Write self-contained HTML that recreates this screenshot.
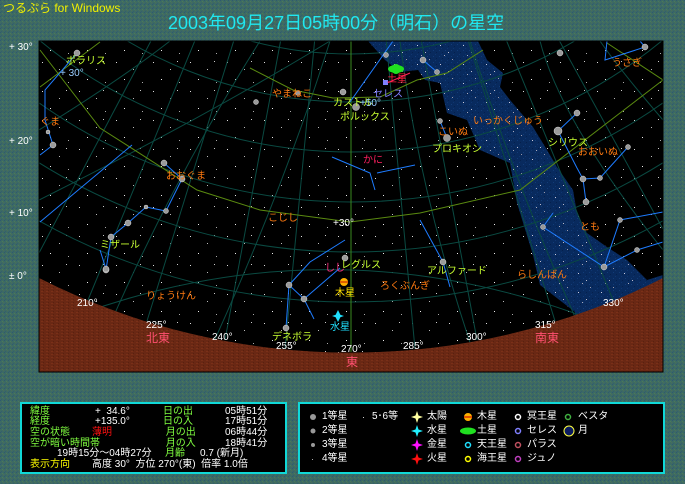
<!DOCTYPE html>
<html><head><meta charset="utf-8"><style>
*{margin:0;padding:0}
body{width:685px;height:484px;overflow:hidden;background:#3d6a64;font-family:"Liberation Sans","Noto Sans CJK JP",sans-serif;position:relative}
.t{position:absolute;white-space:nowrap;font-size:10px;line-height:11px}
.panel{position:absolute;background:#000;border:2px solid #10d8d8;box-sizing:border-box}
</style></head><body>
<svg width="685" height="484" style="position:absolute;left:0;top:0">
<defs>
<pattern id="bgn" width="4" height="4" patternUnits="userSpaceOnUse">
<rect width="4" height="4" fill="#3d6a64"/><rect x="0" y="0" width="1" height="1" fill="#2f5a70"/><rect x="2" y="1" width="1" height="1" fill="#4a7a5a"/><rect x="1" y="3" width="1" height="1" fill="#355e6e"/><rect x="3" y="2" width="1" height="1" fill="#4c6e58"/>
</pattern>
<pattern id="gnd" width="5" height="3" patternUnits="userSpaceOnUse">
<rect width="5" height="3" fill="#6a2814"/><rect x="1" y="0" width="2" height="1" fill="#7a3018"/><rect x="3" y="2" width="1" height="1" fill="#5a200e"/>
</pattern>
<pattern id="st" width="37" height="29" patternUnits="userSpaceOnUse">
<rect x="5" y="4" width="1" height="1" fill="#ddd"/><rect x="22" y="11" width="1" height="1" fill="#bbb"/><rect x="13" y="21" width="1" height="1" fill="#eee"/><rect x="31" y="24" width="1" height="1" fill="#aaa"/><rect x="29" y="3" width="1" height="1" fill="#ccc"/>
</pattern>
<pattern id="st2" width="23" height="19" patternUnits="userSpaceOnUse">
<rect x="3" y="7" width="1" height="1" fill="#ccd"/><rect x="15" y="2" width="1" height="1" fill="#99a"/><rect x="11" y="14" width="1" height="1" fill="#bbc"/><rect x="7" y="17" width="1" height="1" fill="#aab"/>
</pattern>
<pattern id="mw" width="6" height="6" patternUnits="userSpaceOnUse">
<rect width="6" height="6" fill="#082a5e"/><rect x="1" y="2" width="1" height="1" fill="#123c78"/><rect x="4" y="4" width="1" height="1" fill="#05204c"/><rect x="3" y="0" width="1" height="1" fill="#0f3670"/>
</pattern>
<clipPath id="ch"><rect x="39" y="41" width="624" height="331"/></clipPath>
</defs>
<rect width="685" height="484" fill="url(#bgn)"/>
<g clip-path="url(#ch)">
<rect x="39" y="41" width="624" height="331" fill="#000"/>
<rect x="39" y="41" width="624" height="331" fill="url(#st)"/>
<polygon fill="url(#mw)" points="368,41 478,41 487,60 503,73 500,87 510,100 533,127 547,150 557,167 573,190 577,213 587,233 607,247 627,260 647,280 663,275 663,372 575,372 575,312 540,285 533,255 517,203 510,163 480,150 467,120 447,113 440,83 425,80 418,70 400,72 385,60"/>
<polygon fill="url(#st2)" points="368,41 478,41 487,60 503,73 500,87 510,100 533,127 547,150 557,167 573,190 577,213 587,233 607,247 627,260 647,280 575,312 540,285 533,255 517,203 510,163 480,150 467,120 447,113 440,83 425,80 418,70 400,72 385,60"/>
<g fill="none" stroke="#0a4a42" stroke-width="1">
<circle cx="351" cy="-338" r="640"/><circle cx="351" cy="-338" r="590"/><circle cx="351" cy="-338" r="540"/><circle cx="351" cy="-338" r="490"/><circle cx="351" cy="-338" r="440"/><circle cx="351" cy="-338" r="392"/>
<line x1="351" y1="-338" x2="88" y2="300"/><line x1="351" y1="-338" x2="147" y2="321"/><line x1="351" y1="-338" x2="225" y2="340"/><line x1="351" y1="-338" x2="285" y2="349"/><line x1="351" y1="-338" x2="415" y2="349"/><line x1="351" y1="-338" x2="477" y2="340"/><line x1="351" y1="-338" x2="555" y2="321"/><line x1="351" y1="-338" x2="613" y2="300"/><line x1="351" y1="-338" x2="30" y2="270"/><line x1="351" y1="-338" x2="680" y2="260"/>
<path d="M39,200 Q200,120 330,41"/><path d="M39,130 Q120,80 170,41"/><path d="M90,372 Q160,200 260,41"/><path d="M200,372 Q280,200 330,41"/><path d="M480,372 Q420,200 400,41"/><path d="M600,372 Q520,200 470,41"/><path d="M663,250 Q560,120 540,41"/><path d="M663,120 Q620,70 600,41"/><path d="M39,330 Q350,200 663,350"/>
</g>
<g fill="none" stroke="#5a8a10" stroke-width="1">
<path d="M40,50 L100,128 L197,190 L260,210 L350,222 L420,213 L520,190 L607,123 L663,80"/>
<path d="M40,87 L100,42"/><path d="M250,68 L293,90 L333,98 L380,97 L417,80 L447,73 L483,50"/><path d="M607,43 L663,80"/>
</g>
<line x1="351" y1="41" x2="351" y2="352" stroke="#3a8a20" stroke-width="1"/>
<g fill="none" stroke="#1e7cff" stroke-width="1">
<polyline points="77,53 45,90 45,120 53,145 40,155"/><polyline points="132,145 40,222"/>
<polyline points="164,163 182,179 166,211 146,207 128,223 111,237 106,270"/>
<polyline points="350,102 393,41"/><polyline points="423,60 437,72"/><polyline points="440,121 447,138"/>
<polyline points="332,157 370,173 375,190"/><polyline points="377,173 415,165"/>
<polyline points="607,41 605,60 645,47 640,41"/>
<polyline points="577,113 558,131 577,168 583,179 586,202"/><polyline points="583,179 600,178 628,147"/>
<polyline points="553,213 543,227 604,267 620,220 663,212"/><polyline points="604,267 637,250 663,242"/>
<polyline points="289,285 304,299 314,319"/><polyline points="289,285 286,328"/><polyline points="289,285 310,262 345,240"/><polyline points="304,299 340,268"/>
<polyline points="420,220 443,262 450,287"/><polyline points="106,269 100,250"/>
</g>
<path d="M387,83 L410,73" stroke="#ff2060"/>
<g fill="#9a9a9a" stroke="#ddd" stroke-width="0.5">
<circle cx="77" cy="53" r="3"/><circle cx="53" cy="145" r="3"/><circle cx="164" cy="163" r="3"/><circle cx="182" cy="179" r="3"/><circle cx="166" cy="211" r="2.5"/><circle cx="146" cy="207" r="2"/><circle cx="128" cy="223" r="3"/><circle cx="111" cy="237" r="3"/><circle cx="106" cy="270" r="3"/>
<circle cx="343" cy="92" r="3"/><circle cx="356" cy="107" r="3.5"/><circle cx="423" cy="60" r="3"/><circle cx="437" cy="72" r="2.5"/><circle cx="440" cy="121" r="2.5"/><circle cx="447" cy="138" r="3.5"/><circle cx="386" cy="55" r="2.5"/>
<circle cx="558" cy="131" r="4"/><circle cx="577" cy="113" r="3"/><circle cx="583" cy="179" r="3"/><circle cx="586" cy="202" r="3"/><circle cx="600" cy="178" r="2.5"/><circle cx="628" cy="147" r="2.5"/><circle cx="645" cy="47" r="3"/><circle cx="560" cy="53" r="3"/>
<circle cx="543" cy="227" r="2.5"/><circle cx="604" cy="267" r="3"/><circle cx="620" cy="220" r="2.5"/><circle cx="637" cy="250" r="2.5"/><circle cx="443" cy="262" r="3"/>
<circle cx="289" cy="285" r="3"/><circle cx="304" cy="299" r="3"/><circle cx="286" cy="328" r="3"/><circle cx="345" cy="258" r="3"/><circle cx="106" cy="269" r="3"/><circle cx="256" cy="102" r="2.5"/><circle cx="298" cy="93" r="2.5"/><circle cx="48" cy="132" r="2"/>
</g>
<path d="M39,278 A690,690 0 0 0 663,278 L663,372 L39,372 Z" fill="url(#gnd)"/>
<ellipse cx="396" cy="69" rx="8" ry="4" fill="#20e020"/><rect x="392" y="64" width="8" height="10" rx="4" fill="#20e020"/>
<rect x="383" y="80" width="5" height="5" fill="#8080ff"/>
<circle cx="344" cy="282" r="4" fill="#ffb000"/><rect x="340" y="281" width="8" height="2" fill="#e06000"/>
<path d="M338,310 L341,316 L338,322 L335,316 Z M332,316 L338,314 L344,316 L338,318 Z" fill="#20e0ff"/>
</g>
<rect x="39" y="41" width="624" height="331" fill="none" stroke="#000" stroke-width="1"/>
</svg>

<div class="t" style="left:3px;top:2px;font-size:12px;line-height:13px;color:#f0f000">つるぷら for Windows</div>
<div class="t" style="left:168px;top:13px;font-size:18px;line-height:20px;color:#20e8f0">2003年09月27日05時00分（明石）の星空</div>
<div class="t" style="left:9px;top:42px;color:#fff">+ 30°</div>
<div class="t" style="left:9px;top:136px;color:#fff">+ 20°</div>
<div class="t" style="left:9px;top:208px;color:#fff">+ 10°</div>
<div class="t" style="left:9px;top:271px;color:#fff">± 0°</div>

<div class="t" style="left:66px;top:56px;color:#c8ff30">ポラリス</div>
<div class="t" style="left:60px;top:68px;color:#9cf">+ 30°</div>
<div class="t" style="left:40px;top:117px;color:#ff7a10">ぐま</div>
<div class="t" style="left:166px;top:171px;color:#ff7a10">おおぐま</div>
<div class="t" style="left:100px;top:240px;color:#c8ff30">ミザール</div>
<div class="t" style="left:272px;top:89px;color:#ff7a10">やまねこ</div>
<div class="t" style="left:333px;top:98px;color:#c8ff30">カストル</div>
<div class="t" style="left:360px;top:98px;color:#9cf">+50°</div>
<div class="t" style="left:340px;top:112px;color:#c8ff30">ポルックス</div>
<div class="t" style="left:387px;top:74px;color:#ff2040">土星</div>
<div class="t" style="left:373px;top:89px;color:#8080ff">セレス</div>
<div class="t" style="left:363px;top:155px;color:#ff2060">かに</div>
<div class="t" style="left:438px;top:127px;color:#ff7a10">こいぬ</div>
<div class="t" style="left:432px;top:144px;color:#c8ff30">プロキオン</div>
<div class="t" style="left:473px;top:116px;color:#ff7a10">いっかくじゅう</div>
<div class="t" style="left:548px;top:138px;color:#c8ff30">シリウス</div>
<div class="t" style="left:578px;top:147px;color:#ff7a10">おおいぬ</div>
<div class="t" style="left:612px;top:58px;color:#ff7a10">うさぎ</div>
<div class="t" style="left:580px;top:222px;color:#ff7a10">とも</div>
<div class="t" style="left:517px;top:270px;color:#ff7a10">らしんばん</div>
<div class="t" style="left:427px;top:266px;color:#c8ff30">アルファード</div>
<div class="t" style="left:268px;top:213px;color:#ff7a10">こじし</div>
<div class="t" style="left:333px;top:218px;color:#fff">+30°</div>
<div class="t" style="left:325px;top:263px;color:#ff3080">しし</div>
<div class="t" style="left:341px;top:260px;color:#c8ff30">レグルス</div>
<div class="t" style="left:335px;top:288px;color:#ffe000">木星</div>
<div class="t" style="left:330px;top:322px;color:#20e0ff">水星</div>
<div class="t" style="left:146px;top:291px;color:#ff7a10">りょうけん</div>
<div class="t" style="left:380px;top:281px;color:#ff7a10">ろくぶんぎ</div>
<div class="t" style="left:272px;top:332px;color:#c8ff30">デネボラ</div>
<div class="t" style="left:77px;top:298px;color:#fff">210°</div>
<div class="t" style="left:146px;top:320px;color:#fff">225°</div>
<div class="t" style="left:212px;top:332px;color:#fff">240°</div>
<div class="t" style="left:276px;top:341px;color:#fff">255°</div>
<div class="t" style="left:341px;top:344px;color:#fff">270°</div>
<div class="t" style="left:403px;top:341px;color:#fff">285°</div>
<div class="t" style="left:466px;top:332px;color:#fff">300°</div>
<div class="t" style="left:535px;top:320px;color:#fff">315°</div>
<div class="t" style="left:603px;top:298px;color:#fff">330°</div>
<div class="t" style="left:146px;top:333px;font-size:12px;color:#ff5070">北東</div>
<div class="t" style="left:346px;top:357px;font-size:12px;color:#ff5070">東</div>
<div class="t" style="left:535px;top:333px;font-size:12px;color:#ff5070">南東</div>

<div class="panel" style="left:20px;top:402px;width:267px;height:72px"></div>
<div class="t" style="left:30px;top:406px;color:#80ff40">緯度</div><div class="t" style="left:95px;top:406px;color:#fff">+&nbsp;&nbsp;34.6°</div><div class="t" style="left:163px;top:406px;color:#80ff40">日の出</div><div class="t" style="left:225px;top:406px;color:#fff">05時51分</div>
<div class="t" style="left:30px;top:416px;color:#80ff40">経度</div><div class="t" style="left:95px;top:416px;color:#fff">+135.0°</div><div class="t" style="left:163px;top:416px;color:#80ff40">日の入</div><div class="t" style="left:225px;top:416px;color:#fff">17時51分</div>
<div class="t" style="left:30px;top:427px;color:#80ff40">空の状態</div><div class="t" style="left:92px;top:427px;color:#ff1010">薄明</div><div class="t" style="left:163px;top:427px;color:#80ff40">&nbsp;月の出</div><div class="t" style="left:225px;top:427px;color:#fff">06時44分</div>
<div class="t" style="left:30px;top:438px;color:#80ff40">空が暗い時間帯</div><div class="t" style="left:163px;top:438px;color:#80ff40">&nbsp;月の入</div><div class="t" style="left:225px;top:438px;color:#fff">18時41分</div>
<div class="t" style="left:57px;top:448px;color:#fff">19時15分〜04時27分</div><div class="t" style="left:165px;top:448px;color:#80ff40">月齢</div><div class="t" style="left:200px;top:448px;color:#fff">0.7 (新月)</div>
<div class="t" style="left:30px;top:459px;color:#ffff00">表示方向</div><div class="t" style="left:92px;top:459px;color:#fff">高度 30°&nbsp; 方位 270°(東)&nbsp; 倍率 1.0倍</div>

<div class="panel" style="left:298px;top:402px;width:367px;height:72px"></div>
<svg width="685" height="484" style="position:absolute;left:0;top:0">
<circle cx="313" cy="417" r="3" fill="#999"/><circle cx="313" cy="431" r="2.5" fill="#999"/><circle cx="313" cy="445" r="2" fill="#999"/><rect x="312" y="459" width="1" height="1" fill="#aaa"/><rect x="363" y="417" width="1" height="1" fill="#ccc"/>
<path d="M417,411 L419,417 L417,423 L415,417 Z M411,417 L417,415 L423,417 L417,419 Z" fill="#ffffa0"/>
<path d="M417,425 L419,431 L417,437 L415,431 Z M411,431 L417,429 L423,431 L417,433 Z" fill="#20f0ff"/>
<path d="M417,439 L419,445 L417,451 L415,445 Z M411,445 L417,443 L423,445 L417,447 Z" fill="#ff10ff"/>
<path d="M417,453 L419,459 L417,465 L415,459 Z M411,459 L417,457 L423,459 L417,461 Z" fill="#ff1010"/>
<circle cx="468" cy="417" r="4" fill="#ffb000"/><rect x="464" y="416" width="8" height="2" fill="#e05000"/>
<ellipse cx="468" cy="431" rx="8" ry="3.5" fill="#20e020"/>
<circle cx="468" cy="445" r="2.5" fill="none" stroke="#20e0ff" stroke-width="1.5"/><circle cx="468" cy="459" r="2.5" fill="none" stroke="#ffff00" stroke-width="1.5"/>
<circle cx="518" cy="417" r="2.5" fill="none" stroke="#fff" stroke-width="1.5"/><circle cx="518" cy="431" r="2.5" fill="none" stroke="#8080ff" stroke-width="1.5"/><circle cx="518" cy="445" r="2.5" fill="none" stroke="#c05060" stroke-width="1.5"/><circle cx="518" cy="459" r="2.5" fill="none" stroke="#c040c0" stroke-width="1.5"/>
<circle cx="568" cy="417" r="2.5" fill="none" stroke="#40b040" stroke-width="1.5"/><circle cx="569" cy="431" r="5" fill="#0a1a60" stroke="#ffff40" stroke-width="1"/>
</svg>
<div class="t" style="left:322px;top:411px;color:#fff">1等星</div><div class="t" style="left:322px;top:425px;color:#fff">2等星</div><div class="t" style="left:322px;top:439px;color:#fff">3等星</div><div class="t" style="left:322px;top:453px;color:#fff">4等星</div>
<div class="t" style="left:372px;top:411px;color:#fff">5･6等</div>
<div class="t" style="left:427px;top:411px;color:#fff">太陽</div><div class="t" style="left:427px;top:425px;color:#fff">水星</div><div class="t" style="left:427px;top:439px;color:#fff">金星</div><div class="t" style="left:427px;top:453px;color:#fff">火星</div>
<div class="t" style="left:477px;top:411px;color:#fff">木星</div><div class="t" style="left:477px;top:425px;color:#fff">土星</div><div class="t" style="left:477px;top:439px;color:#fff">天王星</div><div class="t" style="left:477px;top:453px;color:#fff">海王星</div>
<div class="t" style="left:527px;top:411px;color:#fff">冥王星</div><div class="t" style="left:527px;top:425px;color:#fff">セレス</div><div class="t" style="left:527px;top:439px;color:#fff">パラス</div><div class="t" style="left:527px;top:453px;color:#fff">ジュノ</div>
<div class="t" style="left:578px;top:411px;color:#fff">ベスタ</div><div class="t" style="left:578px;top:425px;color:#fff">月</div>
</body></html>
